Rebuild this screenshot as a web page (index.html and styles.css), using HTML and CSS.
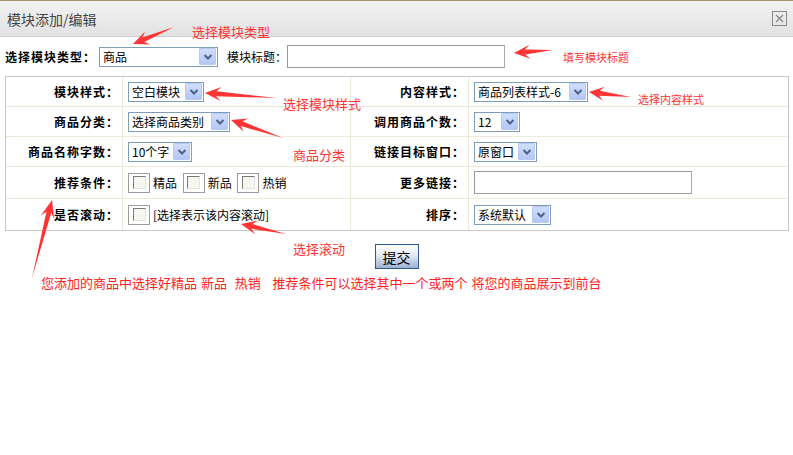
FILE: index.html
```html
<!DOCTYPE html>
<html lang="zh-CN">
<head>
    <meta charset="UTF-8">
    <title>模块添加/编辑</title>
    <link rel="stylesheet" href="styles.css">
</head>
<body>

<div class="dialog">
    <div class="titlebar">
        <span class="title">模块添加/编辑</span>
        <svg class="close" width="15" height="15" viewBox="0 0 15 15">
            <rect x="0.5" y="0.5" width="14" height="14" fill="none" stroke="#8a8a8a"/>
            <path d="M4 4L11 11M11 4L4 11" stroke="#8a8a8a" stroke-width="1.4"/>
        </svg>
    </div>

    <div class="toprow">
        <b class="toplabel">选择模块类型：</b>
        <span class="sel sel-type">
            <select><option>商品</option></select>
            <i class="arr"><svg width="10" height="8" viewBox="0 0 10 8"><path d="M1.5 2L5 5.5 8.5 2" fill="none" stroke="#4d6185" stroke-width="2"/></svg></i>
        </span>
        <span class="titlelabel">模块标题：</span>
        <input type="text" class="txt txt-title">
    </div>

    <table class="form">
        <colgroup>
            <col class="c1"><col class="c2"><col class="c3"><col class="c4">
        </colgroup>
        <tr>
            <td class="lbl">模块样式：</td>
            <td>
                <span class="sel sel-style">
                    <select><option>空白模块</option></select>
                    <i class="arr"><svg width="10" height="8" viewBox="0 0 10 8"><path d="M1.5 2L5 5.5 8.5 2" fill="none" stroke="#4d6185" stroke-width="2"/></svg></i>
                </span>
            </td>
            <td class="lbl">内容样式：</td>
            <td>
                <span class="sel sel-content">
                    <select><option>商品列表样式-6</option></select>
                    <i class="arr"><svg width="10" height="8" viewBox="0 0 10 8"><path d="M1.5 2L5 5.5 8.5 2" fill="none" stroke="#4d6185" stroke-width="2"/></svg></i>
                </span>
            </td>
        </tr>
        <tr>
            <td class="lbl">商品分类：</td>
            <td>
                <span class="sel sel-cat">
                    <select><option>选择商品类别</option></select>
                    <i class="arr"><svg width="10" height="8" viewBox="0 0 10 8"><path d="M1.5 2L5 5.5 8.5 2" fill="none" stroke="#4d6185" stroke-width="2"/></svg></i>
                </span>
            </td>
            <td class="lbl">调用商品个数：</td>
            <td>
                <span class="sel sel-num">
                    <select><option>12</option></select>
                    <i class="arr"><svg width="10" height="8" viewBox="0 0 10 8"><path d="M1.5 2L5 5.5 8.5 2" fill="none" stroke="#4d6185" stroke-width="2"/></svg></i>
                </span>
            </td>
        </tr>
        <tr>
            <td class="lbl">商品名称字数：</td>
            <td>
                <span class="sel sel-len">
                    <select><option>10个字</option></select>
                    <i class="arr"><svg width="10" height="8" viewBox="0 0 10 8"><path d="M1.5 2L5 5.5 8.5 2" fill="none" stroke="#4d6185" stroke-width="2"/></svg></i>
                </span>
            </td>
            <td class="lbl">链接目标窗口：</td>
            <td>
                <span class="sel sel-target">
                    <select><option>原窗口</option></select>
                    <i class="arr"><svg width="10" height="8" viewBox="0 0 10 8"><path d="M1.5 2L5 5.5 8.5 2" fill="none" stroke="#4d6185" stroke-width="2"/></svg></i>
                </span>
            </td>
        </tr>
        <tr class="tall">
            <td class="lbl">推荐条件：</td>
            <td>
                <label class="chk"><input type="checkbox"></label><span class="chktext">精品</span>
                <label class="chk"><input type="checkbox"></label><span class="chktext">新品</span>
                <label class="chk"><input type="checkbox"></label><span class="chktext">热销</span>
            </td>
            <td class="lbl">更多链接：</td>
            <td><input type="text" class="txt txt-more"></td>
        </tr>
        <tr class="last">
            <td class="lbl">是否滚动：</td>
            <td>
                <label class="chk"><input type="checkbox"></label><span class="chktext">[选择表示该内容滚动]</span>
            </td>
            <td class="lbl">排序：</td>
            <td>
                <span class="sel sel-order">
                    <select><option>系统默认</option></select>
                    <i class="arr"><svg width="10" height="8" viewBox="0 0 10 8"><path d="M1.5 2L5 5.5 8.5 2" fill="none" stroke="#4d6185" stroke-width="2"/></svg></i>
                </span>
            </td>
        </tr>
    </table>

    <div class="actions">
        <button type="button" class="submit">提交</button>
    </div>

    <p class="note">您添加的商品中选择好精品 新品  热销   推荐条件可以选择其中一个或两个 将您的商品展示到前台</p>

    <!-- 红色标注 -->
    <span class="tip tip-type">选择模块类型</span>
    <span class="tip tip-small tip-title">填写模块标题</span>
    <span class="tip tip-style">选择模块样式</span>
    <span class="tip tip-cat">商品分类</span>
    <span class="tip tip-small tip-content">选择内容样式</span>
    <span class="tip tip-scroll">选择滚动</span>

    <svg class="marks" width="793" height="455" viewBox="0 0 793 455">
        <g fill="#ff3535">
            <polygon points="174,27 142.3,37.4 145.1,31.4 133,44 150.5,44.4 144.3,42"/>
            <polygon points="553,50 525,49.6 529.5,44.8 514,53 530.5,58.8 525.4,54.6"/>
            <polygon points="277,98 216.4,91.3 221.5,87.1 205,93 220.5,101.1 216,96.3"/>
            <polygon points="283,138 242.4,121.3 248.4,118.6 231,120 243.8,131.8 240.8,126.1"/>
            <polygon points="631,97 599.7,90.7 604.7,86.8 589,92 603.1,100.8 599.1,95.7"/>
            <polygon points="286,234 252.4,224 258.1,220.7 241,224 255.1,234.3 251.4,228.8"/>
            <polygon points="32,278 51.3,212.8 54.3,219.1 52,200 40.7,215.7 46.5,211.6"/>
        </g>
    </svg>
</div>

</body>
</html>
```

FILE: styles.css
```css
body {
    margin: 0;
    background-color: #fff;
    font-family: "Noto Sans CJK SC", sans-serif;
    font-size: 12px;
    color: #000;
}
.dialog {
    position: relative;
    width: 793px;
    height: 455px;
    overflow: hidden;
}
.titlebar {
    height: 35px;
    border-top: 1px solid #a39570;
    border-bottom: 1px solid #d0d0d0;
    background: linear-gradient(#f2f2f2, #e2e2e2);
    display: flex;
    align-items: center;
    justify-content: space-between;
    padding: 0 6px 0 7px;
}
.title {
    font-size: 14px;
    color: #444;
}
.close {
    display: block;
}
.toprow {
    height: 39px;
    display: flex;
    align-items: center;
    padding: 0 5px;
}
.toplabel {
    letter-spacing: 1px;
    margin-right: 3px;
}
.titlelabel {
    margin: 0 0 0 9px;
}
.sel {
    display: inline-flex;
    align-items: center;
    height: 20px;
    box-sizing: border-box;
    border: 1px solid #7f9db9;
    background-color: #fff;
    vertical-align: middle;
}
.sel select {
    appearance: none;
    -webkit-appearance: none;
    flex: 1;
    min-width: 0;
    height: 18px;
    border: none;
    background: transparent;
    padding: 0 0 0 3px;
    margin: 0;
    font-family: inherit;
    font-size: 12px;
    color: #000;
    outline: none;
}
.arr {
    display: flex;
    align-items: center;
    justify-content: center;
    width: 15px;
    height: 15px;
    margin-right: 1px;
    border: 1px solid #b6c9f5;
    border-radius: 1px;
    background: linear-gradient(#d0defd, #b3c7f6);
}
.sel-type { width: 119px; }
.sel-style { width: 76px; }
.sel-content { width: 114px; }
.sel-cat { width: 102px; }
.sel-num { width: 46px; }
.sel-len { width: 64px; }
.sel-target { width: 63px; }
.sel-order { width: 77px; }
.txt {
    box-sizing: border-box;
    height: 23px;
    border: 1px solid #999;
    border-right-color: #a9a9a9;
    padding: 0 3px;
    margin: 0;
    font-family: inherit;
    font-size: 12px;
    vertical-align: middle;
}
.txt-title { width: 218px; }
.txt-more { width: 218px; }
.form {
    margin-left: 5px;
    width: 784px;
    border-collapse: separate;
    border-spacing: 0;
    table-layout: fixed;
    border: 1px solid #c8c8c8;
}
.c1 { width: 117px; }
.c2 { width: 228px; }
.c3 { width: 118px; }
.form td {
    box-sizing: border-box;
    border-right: 1px solid #ece9d8;
    border-bottom: 1px solid #ece9d8;
    height: 30px;
    padding: 0 0 0 5px;
    vertical-align: middle;
    white-space: nowrap;
}
.form td:last-child {
    border-right: none;
}
.form tr.tall td {
    height: 32px;
}
.form tr.last td {
    height: 31px;
    border-bottom: none;
}
.form td.lbl {
    text-align: right;
    font-weight: bold;
    letter-spacing: 1px;
    padding: 0 3px 0 0;
}
.chk {
    display: inline-flex;
    align-items: center;
    justify-content: center;
    width: 22px;
    height: 20px;
    box-sizing: border-box;
    border: 1px solid #9c9c9c;
    vertical-align: middle;
}
.chk input {
    appearance: none;
    -webkit-appearance: none;
    width: 13px;
    height: 13px;
    margin: 0;
    box-sizing: border-box;
    border: 1px solid;
    border-color: #7a7a7a #e4e4e4 #e4e4e4 #7a7a7a;
    background-color: #f7f6ef;
}
.chktext {
    margin: 0 3px 0 3px;
    vertical-align: middle;
}
.actions {
    margin-top: 13px;
    text-align: center;
}
.submit {
    width: 44px;
    height: 25px;
    padding: 0;
    border: 1px solid #2f5a8d;
    background: linear-gradient(#ffffff, #e4e9f3 45%, #9db0d3);
    font-family: inherit;
    font-size: 14px;
    color: #000;
}
.note {
    margin: 4px 0 0 41px;
    font-size: 13px;
    color: #f22;
    white-space: pre;
    word-spacing: 1px;
}
.tip {
    position: absolute;
    font-size: 13px;
    line-height: 16px;
    color: #f33;
    white-space: nowrap;
}
.tip-small {
    font-size: 11px;
    line-height: 14px;
}
.tip-type { left: 192px; top: 24px; }
.tip-title { left: 563px; top: 50px; }
.tip-style { left: 283px; top: 96px; }
.tip-cat { left: 293px; top: 147px; }
.tip-content { left: 638px; top: 92px; }
.tip-scroll { left: 293px; top: 241px; }
.marks {
    position: absolute;
    left: 0;
    top: 0;
    pointer-events: none;
}
```
